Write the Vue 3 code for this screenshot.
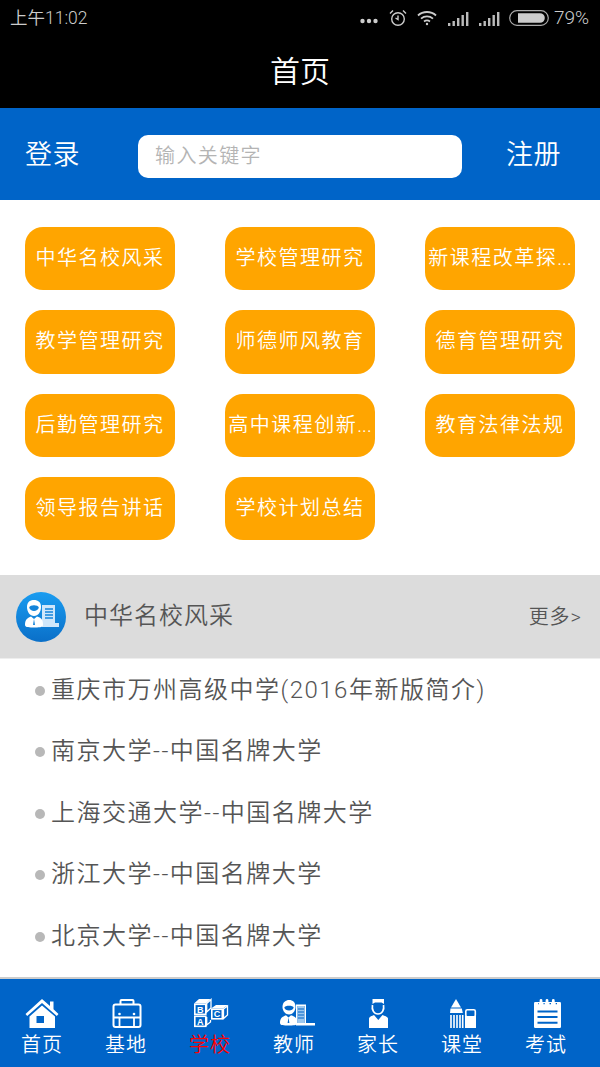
<script setup>
const cats = ['中华名校风采','学校管理研究','新课程改革探...','教学管理研究','师德师风教育','德育管理研究','后勤管理研究','高中课程创新...','教育法律法规','领导报告讲话','学校计划总结']
const news = ['重庆市万州高级中学(2016年新版简介)','南京大学--中国名牌大学','上海交通大学--中国名牌大学','浙江大学--中国名牌大学','北京大学--中国名牌大学']
const tabs = [
  { k: 'home', t: '首页' },
  { k: 'base', t: '基地' },
  { k: 'school', t: '学校', on: true },
  { k: 'teacher', t: '教师' },
  { k: 'parent', t: '家长' },
  { k: 'class', t: '课堂' },
  { k: 'exam', t: '考试' }
]
</script>

<template>
  <div class="page">
    <div class="status">
      <span class="time">上午11:02</span>
      <div class="sright">
        <svg class="s-dots" width="18" height="6" viewBox="0 0 18 6"><circle cx="2.5" cy="3" r="2.2" /><circle cx="9" cy="3" r="2.2" /><circle cx="15.5" cy="3" r="2.2" /></svg>
        <svg class="s-alarm" width="18" height="18" viewBox="0 0 18 18" fill="none" stroke="#ccc" stroke-width="1.4"><circle cx="9" cy="10" r="6.3" /><path d="M9 6.5V10.5L6.5 9" /><path d="M1 4.5L4 1.5M17 4.5L14 1.5" /></svg>
        <svg class="s-wifi" width="20" height="16" viewBox="0 0 20 16" fill="none" stroke="#ccc" stroke-width="1.8"><path d="M1 5.5C6 .8 14 .8 19 5.5" /><path d="M4 8.6C7.5 5.6 12.5 5.6 16 8.6" /><path d="M7 11.5C8.8 10.2 11.2 10.2 13 11.5" /><circle cx="10" cy="14" r="1.2" fill="#ccc" stroke="none" /></svg>
        <svg class="s-sig" width="21" height="15" viewBox="0 0 21 15" fill="#bbb"><rect x="0" y="12" width="2.4" height="3" /><rect x="4.5" y="10" width="2.4" height="5" /><rect x="9" y="7" width="2.4" height="8" /><rect x="13.5" y="4" width="2.4" height="11" /><rect x="18" y="1" width="2.4" height="14" /></svg>
        <svg class="s-sig" width="21" height="15" viewBox="0 0 21 15" fill="#bbb"><rect x="0" y="12" width="2.4" height="3" /><rect x="4.5" y="10" width="2.4" height="5" /><rect x="9" y="7" width="2.4" height="8" /><rect x="13.5" y="4" width="2.4" height="11" /><rect x="18" y="1" width="2.4" height="14" /></svg>
        <svg class="s-bat" width="40" height="16" viewBox="0 0 40 16"><rect x=".7" y=".7" width="38.6" height="14.6" rx="7.3" fill="none" stroke="#aaa" stroke-width="1.2" /><path d="M9 3.2H31A4.8 4.8 0 0 1 31 12.8H9Z" fill="#ccc" /></svg>
        <span class="pct">79%</span>
      </div>
    </div>
    <div class="title">首页</div>

    <div class="searchbar">
      <span class="link">登录</span>
      <div class="input">输入关键字</div>
      <span class="link">注册</span>
    </div>

    <div class="grid">
      <div v-for="c in cats" :key="c" class="cat">
        <template v-if="c.endsWith('...')">{{ c.slice(0, -3) }}<span class="ell">...</span></template>
        <template v-else>{{ c }}</template>
      </div>
    </div>

    <div class="sec">
      <div class="sec-icon">
        <svg width="50" height="50" viewBox="0 0 50 50">
          <path d="M26 13H39V31H43V35H26Z" fill="#cfe6fa" />
          <path d="M29 17H37M29 20H37M29 23H37M29 26H37" stroke="#1484da" stroke-width="1.4" />
          <path d="M11 15C11 9 15 8 18 8C22 8 25 10 25 15C25 20 22 24 18 24C14 24 11 20 11 15Z" fill="#fff" />
          <path d="M13.2 15.5C14 12.5 22 12.5 22.8 15.5C22 20 14 20 13.2 15.5Z" fill="#1484da" />
          <path d="M9 33C9 27 12 26 15 24.5L18 27L21 24.5C25 26 27 27 27 33C27 35.5 22 35.5 18 35.5C14 35.5 9 35.5 9 33Z" fill="#fff" />
          <path d="M18 27L17 33H19Z" fill="#1484da" />
        </svg>
      </div>
      <span class="sec-title">中华名校风采</span>
      <span class="more">更多&gt;</span>
    </div>

    <ul class="news">
      <li v-for="n in news" :key="n"><i class="dot"></i><span>{{ n }}</span></li>
    </ul>

    <nav class="tabs">
      <div v-for="t in tabs" :key="t.k" class="tab" :class="{ on: t.on }">
        <svg class="ico" width="44" height="33" viewBox="0 0 44 33">
          <g v-if="t.k === 'home'">
            <path d="M22 1L30 8V3.5H33.5V11.2L38.5 16L36.8 18L22 5L7.2 18L5.5 16Z" fill="#fff" />
            <path fill-rule="evenodd" d="M22 7.5L35 18.5V30H9.5V18.5ZM16.5 18V25H24V18Z" fill="#fff" />
          </g>
          <g v-else-if="t.k === 'base'">
            <path d="M16.5 6V3Q16.5 2 17.5 2H28.5Q29.5 2 29.5 3V6" fill="none" stroke="#fff" stroke-width="2" />
            <rect x="9.5" y="6.5" width="27" height="22.5" rx="2" fill="none" stroke="#fff" stroke-width="2" />
            <path d="M10 19.5H36M15.5 19.5V29M30 19.5V29" stroke="#fff" stroke-width="1.8" fill="none" />
            <circle cx="15.5" cy="16" r="1.3" fill="#fff" />
            <circle cx="30" cy="16" r="1.3" fill="#fff" />
          </g>
          <g v-else-if="t.k === 'school'">
            <path d="M6 5.5L11 1H22.5L18 5.5Z" fill="#fff" />
            <path d="M18.7 5.5L23 1.5V10L18.7 14Z" fill="none" stroke="#fff" stroke-width="1.3" />
            <rect x="6.8" y="6.3" width="11" height="10" fill="none" stroke="#fff" stroke-width="1.6" />
            <rect x="6.8" y="18.3" width="11" height="10" fill="none" stroke="#fff" stroke-width="1.6" />
            <path d="M18.7 19V27L22.5 24V22" fill="none" stroke="#fff" stroke-width="1.3" />
            <path d="M23 10.5L28 7H40L35 10.5Z" fill="#fff" />
            <rect x="23.8" y="11.3" width="10.5" height="9.5" fill="none" stroke="#fff" stroke-width="1.6" />
            <path d="M35.5 11L39.5 8V17L35.5 20.5Z" fill="none" stroke="#fff" stroke-width="1.3" />
            <text x="12.3" y="14.5" class="blk">B</text>
            <text x="12.3" y="26.5" class="blk">A</text>
            <text x="29" y="19.2" class="blk">C</text>
          </g>
          <g v-else-if="t.k === 'teacher'">
            <path fill-rule="evenodd" d="M24 6.5H34V25H43V27.5H24ZM25.5 8V25H32.5V8Z" fill="#fff" />
            <path d="M25.5 8H32.5V25H25.5Z" fill="#9cc7ef" />
            <path d="M26 11H32M26 14H32M26 17H32M26 20H32" stroke="#0064c8" stroke-width="1.2" />
            <path d="M10.5 9C10.5 4 14 2 17 2C21 2 23.5 4.5 23.5 9C23.5 13 20.5 16.5 17 16.5C13.5 16.5 10.5 13 10.5 9Z" fill="#fff" />
            <path d="M12.3 9.5C13 7 21 7 21.7 9.5C21 13.5 13 13.5 12.3 9.5Z" fill="#0064c8" />
            <path d="M8 25C8 19.5 11 18.5 14 17.2L16.5 19.5L19 17.2C23 18.5 25 19.5 25 25C25 27.5 21 27.5 16.5 27.5C12 27.5 8 27.5 8 25Z" fill="#fff" />
            <path d="M16.5 19.5L15.6 25H17.4Z" fill="#0064c8" />
          </g>
          <g v-else-if="t.k === 'parent'">
            <path d="M16.5 1H28V6L25.5 4.5H19L16.5 6Z" fill="#fff" />
            <path d="M16.5 7C15.5 12 18 16 22 16C26 16 28.5 12 27.5 7" fill="none" stroke="#fff" stroke-width="1.7" />
            <path d="M13 30V20.5C13 19 15.5 18 18 17L22.3 22L26.5 17C29 18 32 19 32 20.5V30Z" fill="#fff" />
          </g>
          <g v-else-if="t.k === 'class'">
            <path d="M16 1L21 9.5H11Z" fill="#fff" />
            <path d="M10.5 10.5H21.8L22.8 15H10Z" fill="#fff" />
            <path d="M11 17V30M14 17V30M17 17V30M20 17V30M22.7 17V30" stroke="#fff" stroke-width="1.6" />
            <rect x="25.8" y="11.8" width="9.5" height="7" rx="1.5" fill="none" stroke="#fff" stroke-width="1.6" />
            <path d="M25 18H36V30H25Z" fill="#fff" />
          </g>
          <g v-else>
            <rect x="10" y="4" width="27" height="26" rx="1.2" fill="#fff" />
            <path d="M17 2.5V6M23 2.5V6M29.3 2.5V6" stroke="#fff" stroke-width="2.8" stroke-linecap="round" />
            <path d="M14.3 5.7H15M19.5 5.7H20.7M25.5 5.7H27M31.7 5.7H33" stroke="#0064c8" stroke-width="1.2" />
            <path d="M13.5 13.5H33.5M13.5 19H33.5M13.5 24.7H33.5" stroke="#0064c8" stroke-width="2" />
          </g>
        </svg>
        <span class="lab">{{ t.t }}</span>
      </div>
    </nav>
  </div>
</template>

<style>
html, body { margin: 0; padding: 0; background: #fff; }
</style>

<style scoped>
.page {
  width: 600px;
  height: 1067px;
  display: flex;
  flex-direction: column;
  overflow: hidden;
  background: #fff;
  font-family: Roboto, "Noto Sans CJK SC", sans-serif;
  font-weight: 350;
}
.status {
  height: 36px;
  flex: none;
  background: #000;
  color: #ccc;
  display: flex;
  align-items: center;
  justify-content: space-between;
  padding: 0 11px 0 10px;
  font-size: 17.5px;
}
.time { line-height: 36px; }
.sright { display: flex; align-items: center; }
.s-dots { fill: #ccc; margin: 6px 0 0 0; }
.s-alarm { margin-left: 11px; }
.s-wifi { margin-left: 10px; }
.s-sig { margin-left: 10px; }
.s-wifi + .s-sig { margin-left: 11px; }
.s-bat { margin-left: 9px; }
.pct { font-size: 19px; line-height: 36px; margin-left: 5px; }
.title {
  height: 72px;
  flex: none;
  background: #000;
  color: #fff;
  text-align: center;
  font-size: 30px;
  line-height: 72px;
}
.searchbar {
  height: 92px;
  flex: none;
  box-sizing: border-box;
  background: #0064c8;
  display: flex;
  align-items: center;
  padding: 0 40px 0 25px;
}
.link {
  flex: none;
  white-space: nowrap;
  font-size: 27px;
  letter-spacing: .5px;
  color: #fff;
  line-height: 40px;
  margin-top: 2px;
}
.input {
  flex: none;
  width: 324px;
  height: 43px;
  margin: 4px 44px 0 58px;
  box-sizing: border-box;
  padding-left: 17px;
  background: #fff;
  border-radius: 10px;
  color: #b4b4b4;
  font-size: 20px;
  letter-spacing: 1.4px;
  line-height: 43px;
}
.grid {
  height: 375px;
  flex: none;
  box-sizing: border-box;
  padding: 27px 25px 0;
  display: grid;
  grid-template-columns: repeat(3, 150px);
  grid-auto-rows: 63.3px;
  column-gap: 50px;
  row-gap: 20px;
}
.cat {
  background: #ffa500;
  border-radius: 18px;
  color: #fff;
  font-size: 20px;
  letter-spacing: 1.5px;
  text-align: center;
  white-space: nowrap;
  line-height: 63px;
}
.ell { letter-spacing: 0; }
.sec {
  height: 84px;
  flex: none;
  box-sizing: border-box;
  border-bottom: 1px solid #eee;
  background: #dcdcdc;
  display: flex;
  align-items: center;
  padding: 0 18px 0 16px;
  color: #555;
}
.sec-icon {
  width: 50px;
  height: 50px;
  border-radius: 50%;
  background: linear-gradient(#1a9cf0, #0a6fc8);
  display: flex;
}
.sec-title {
  margin-left: 18px;
  font-size: 24px;
  letter-spacing: 1px;
  flex: 1;
  line-height: 36px;
  margin-top: -2px;
}
.more {
  font-size: 20px;
  letter-spacing: 1px;
  line-height: 30px;
}
.news {
  list-style: none;
  margin: 0;
  padding: 0;
  flex: 1;
  min-height: 0;
  color: #555;
}
.news li {
  height: 61.5px;
  display: flex;
  align-items: center;
  padding-left: 35px;
  font-size: 24px;
  letter-spacing: 1.5px;
  line-height: 60px;
}
.dot {
  width: 10px;
  height: 10px;
  margin: 2px 6px 0 0;
  border-radius: 50%;
  background: #b8b8b8;
}
.tabs {
  height: 90px;
  flex: none;
  box-sizing: border-box;
  border-top: 2px solid #ccc;
  background: #0064c8;
  display: grid;
  grid-template-columns: repeat(7, 84px);
  color: #fff;
}
.tab {
  display: flex;
  flex-direction: column;
  align-items: center;
  padding-top: 19px;
}
.ico { flex: none; }
.lab {
  font-size: 20px;
  letter-spacing: 1px;
  line-height: 28px;
}
.tab.on .lab { color: #f00; }
.blk {
  font-family: "Liberation Sans", sans-serif;
  font-size: 9px;
  font-weight: 700;
  fill: #fff;
  text-anchor: middle;
}
</style>
